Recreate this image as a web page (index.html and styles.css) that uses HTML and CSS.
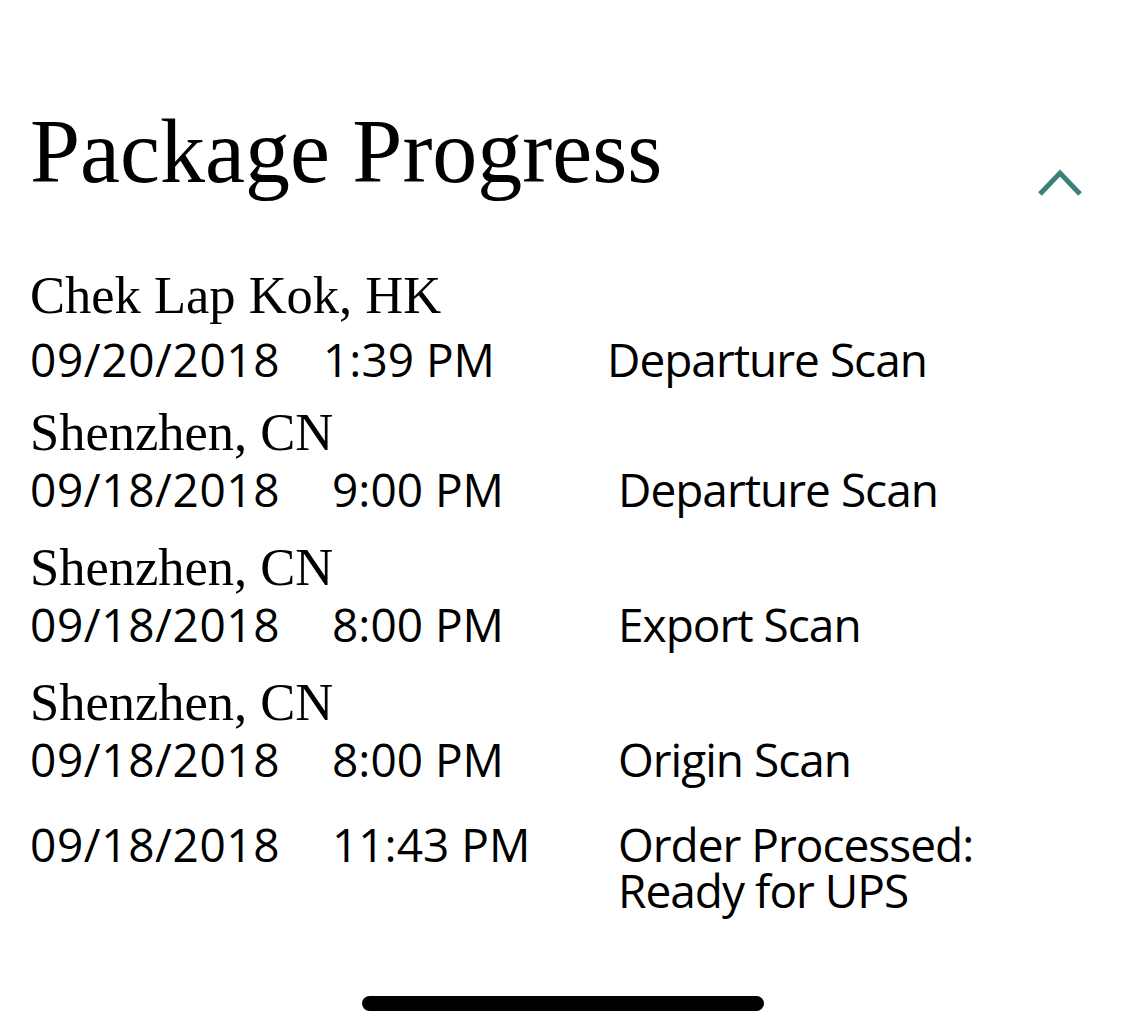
FILE: index.html
```html
<!DOCTYPE html>
<html lang="en">
<head>
<meta charset="utf-8">
<title>Package Progress</title>
<link rel="stylesheet" href="styles.css">
</head>
<body>
<div class="screen">
  <header class="header">
    <h1 class="title">Package Progress</h1>
    <svg class="chevron" width="46" height="30" viewBox="0 0 46 30" aria-hidden="true">
      <path d="M3 26 L23 5 L43 26" fill="none" stroke="#3b8077" stroke-width="5" stroke-linejoin="miter"/>
    </svg>
  </header>

  <section class="events">
    <div class="entry entry-first">
      <div class="location">Chek Lap Kok, HK</div>
      <div class="row row-first">
        <span class="date">09/20/2018</span>
        <span class="time">1:39 PM</span>
        <span class="desc">Departure Scan</span>
      </div>
    </div>
    <div class="entry">
      <div class="location">Shenzhen, CN</div>
      <div class="row">
        <span class="date">09/18/2018</span>
        <span class="time">9:00 PM</span>
        <span class="desc">Departure Scan</span>
      </div>
    </div>
    <div class="entry">
      <div class="location">Shenzhen, CN</div>
      <div class="row">
        <span class="date">09/18/2018</span>
        <span class="time">8:00 PM</span>
        <span class="desc">Export Scan</span>
      </div>
    </div>
    <div class="entry">
      <div class="location">Shenzhen, CN</div>
      <div class="row">
        <span class="date">09/18/2018</span>
        <span class="time">8:00 PM</span>
        <span class="desc">Origin Scan</span>
      </div>
    </div>
    <div class="entry entry-last">
      <div class="row">
        <span class="date">09/18/2018</span>
        <span class="time">11:43 PM</span>
        <span class="desc desc-multi"><span class="desc-line">Order Processed:</span><span class="desc-line">Ready for UPS</span></span>
      </div>
    </div>
  </section>

  <div class="home-indicator"></div>
</div>
</body>
</html>
```

FILE: styles.css
```css
html, body {
  margin: 0;
  padding: 0;
  background: #ffffff;
}

.screen {
  width: 1125px;
  height: 1035px;
  display: flex;
  flex-direction: column;
  color: #000000;
  overflow: hidden;
}

.header {
  display: flex;
  justify-content: space-between;
  align-items: flex-start;
  padding: 102px 42px 0 30px;
}

.title {
  margin: 0;
  font-family: "Liberation Serif", "Times New Roman", serif;
  font-weight: 400;
  font-size: 90px;
  line-height: 100px;
}

.chevron {
  display: block;
  margin-top: 66px;
}

.events {
  display: flex;
  flex-direction: column;
  gap: 22px;
  padding: 63px 0 0 30px;
}

.entry {
  display: flex;
  flex-direction: column;
}

.entry-first {
  margin-bottom: -5px;
}

.entry-last {
  margin-top: 14px;
}

.location {
  font-family: "Liberation Serif", "Times New Roman", serif;
  font-size: 52.5px;
  line-height: 60px;
}

.row {
  display: grid;
  grid-template-columns: 302px 286px auto;
  margin-top: 4px;
  padding-bottom: 3px;
  font-family: "Open Sans", "Liberation Sans", Arial, sans-serif;
  font-size: 46px;
  line-height: 46px;
}

.date {
  letter-spacing: 0.6px;
}

.desc {
  letter-spacing: -1px;
}

.desc-multi {
  display: flex;
  flex-direction: column;
}

.desc-line {
  display: block;
  height: 46px;
}

.entry-last .row {
  margin-top: 0;
}

.row-first {
  grid-template-columns: 293px 284px auto;
  margin-top: 11px;
}

.home-indicator {
  margin: auto auto 24px;
  width: 402px;
  height: 15px;
  border-radius: 8px;
  background: #000000;
}
```
